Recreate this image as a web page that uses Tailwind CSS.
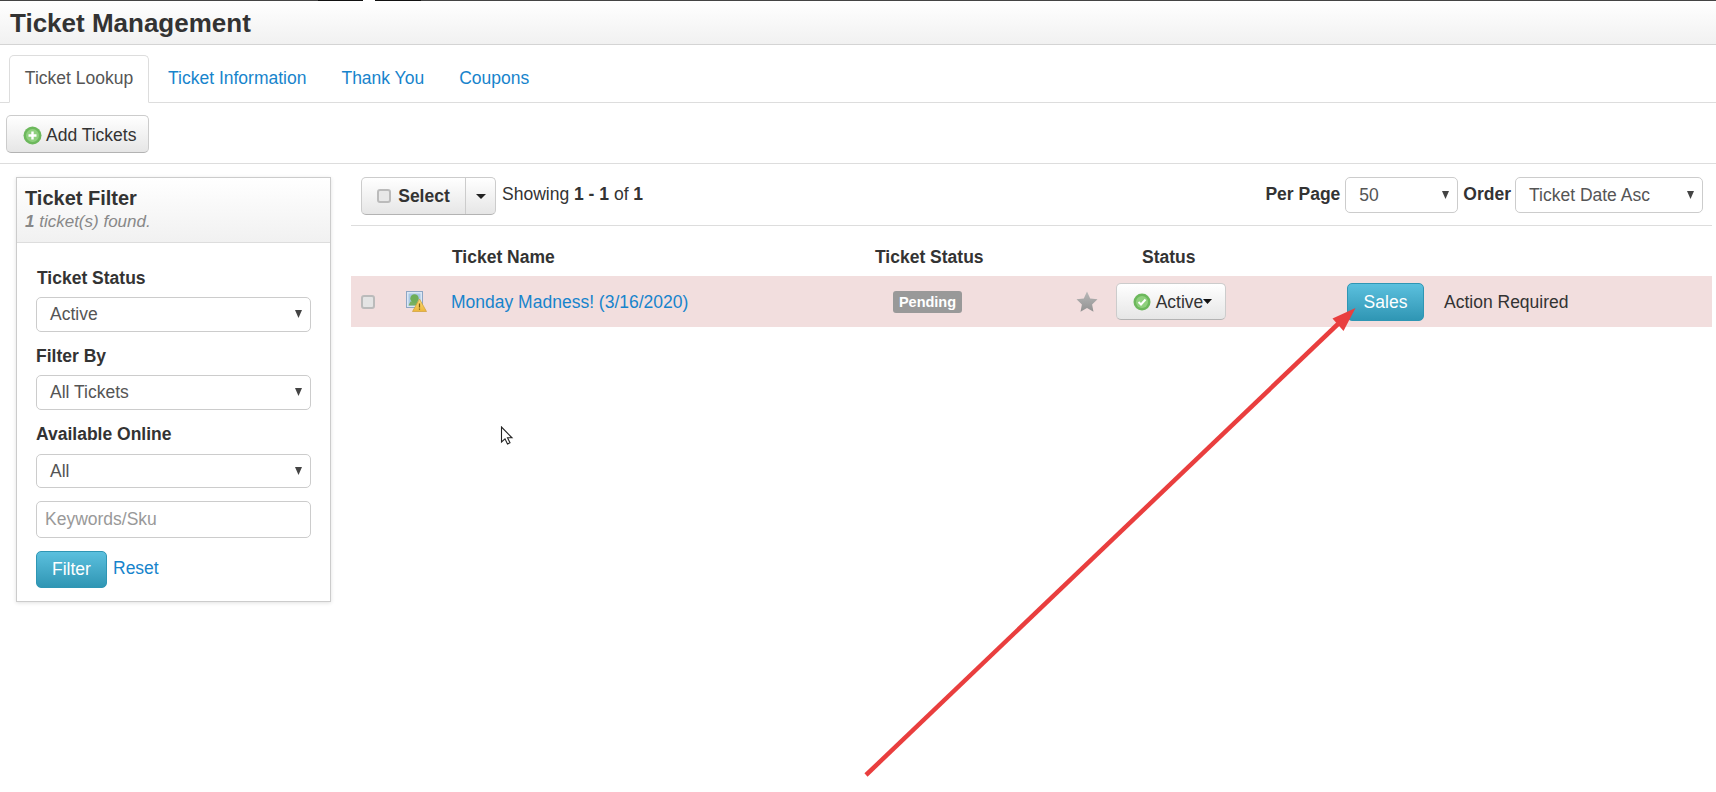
<!DOCTYPE html>
<html lang="en">
<head>
    <meta charset="UTF-8">
    <title>Ticket Management</title>
    <script src="https://cdn.jsdelivr.net/npm/@tailwindcss/browser@4"></script>
</head>
<body class="bg-white overflow-hidden">
<div class="relative w-[1716px] h-[792px] overflow-hidden font-['Liberation_Sans',Arial,sans-serif] text-[17.5px] leading-[24px] text-[#333]">

    <!-- Leftover edge of the page above, cut off by the screenshot -->
    <div class="h-px flex">
        <div class="w-[318px] bg-[#444]"></div>
        <div class="w-[45px] bg-[#111]"></div>
        <div class="w-[12px] bg-white"></div>
        <div class="w-[46px] bg-[#111]"></div>
        <div class="flex-1 bg-[#444]"></div>
    </div>

    <!-- Title bar -->
    <div class="h-[44px] pl-[10px] border-b border-[#d4d4d4] bg-gradient-to-b from-white to-[#f1f1f1]">
        <h1 class="text-[26px] leading-[45px] font-bold">Ticket Management</h1>
    </div>

    <!-- Tabs -->
    <div class="h-[58px] pt-[10px] pl-[9px] flex border-b border-[#ddd]">
        <a class="w-[140px] h-[48px] pb-[2px] flex items-center justify-center bg-white border border-[#ddd] border-b-white rounded-t-[5px] text-[#555]">Ticket Lookup</a>
        <a class="ml-[2px] pl-[17px] pr-[18px] pb-[2px] flex items-center text-[#1784cc]">Ticket Information</a>
        <a class="pl-[17px] pr-[18px] pb-[2px] flex items-center text-[#1784cc]">Thank You</a>
        <a class="px-[17px] pb-[2px] flex items-center text-[#1784cc]">Coupons</a>
    </div>

    <!-- Toolbar -->
    <div class="h-[61px] pt-[12px] pl-[6px] border-b border-[#ddd]">
        <button class="w-[143px] h-[38px] pl-[16px] pt-[2px] flex items-center gap-[4px] rounded-[5px] border border-[#ccc] border-b-[#b3b3b3] bg-gradient-to-b from-white to-[#e6e6e6]">
            <svg width="19" height="19" viewBox="0 0 19 19"><circle cx="9.500" cy="9.500" r="9" fill="#6cb85c"/><circle cx="9.500" cy="9.500" r="6.500" fill="#8fd07e"/><path d="M9.500 5.500v8M5.500 9.500h8" stroke="#fff" stroke-width="2.400"/></svg>
            Add Tickets
        </button>
    </div>

    <div class="flex">
        <!-- Filter sidebar -->
        <div class="w-[351px] pl-[16px] pt-[13px] shrink-0">
            <div class="w-[315px] h-[425px] border border-[#ccc] shadow-[0_1px_4px_rgba(0,0,0,0.12)]">
                <div class="h-[65px] pl-[8px] pt-[8px] border-b border-[#ddd] bg-gradient-to-b from-white to-[#f1f1f1]">
                    <div class="text-[20px] leading-[24px] font-bold">Ticket Filter</div>
                    <div class="mt-[1px] text-[17px] leading-[22px] italic text-[#888]"><b>1</b> ticket(s) found.</div>
                </div>
                <div class="px-[19px] pt-[23px]">
                    <div class="pl-[1px] h-[24px] font-bold leading-[24px]">Ticket Status</div>
                    <div class="mt-[7px] h-[35px] pl-[13px] pr-[8px] pb-[2px] flex items-center justify-between rounded-[5px] border border-[#ccc] text-[#555]">
                        Active
                        <svg width="7" height="8" viewBox="0 0 7 8"><path d="M0 0h7L3.500 8z" fill="#444"/></svg>
                    </div>
                    <div class="mt-[12px] h-[24px] font-bold leading-[24px]">Filter By</div>
                    <div class="mt-[7px] h-[35px] pl-[13px] pr-[8px] pb-[2px] flex items-center justify-between rounded-[5px] border border-[#ccc] text-[#555]">
                        All Tickets
                        <svg width="7" height="8" viewBox="0 0 7 8"><path d="M0 0h7L3.500 8z" fill="#444"/></svg>
                    </div>
                    <div class="mt-[12px] h-[24px] font-bold leading-[24px]">Available Online</div>
                    <div class="mt-[8px] h-[34px] pl-[13px] pr-[8px] flex items-center justify-between rounded-[5px] border border-[#ccc] text-[#555]">
                        All
                        <svg width="7" height="8" viewBox="0 0 7 8"><path d="M0 0h7L3.500 8z" fill="#444"/></svg>
                    </div>
                    <input placeholder="Keywords/Sku" class="mt-[13px] block w-full h-[37px] pl-[8px] rounded-[5px] border border-[#ccc] placeholder:text-[#999]">
                    <div class="mt-[13px] flex items-start">
                        <button class="w-[71px] h-[37px] pb-[1px] rounded-[5px] border border-[#2f96b4] text-white bg-gradient-to-b from-[#5bc0de] to-[#2f96b4]">Filter</button>
                        <a class="ml-[6px] mt-[5px] text-[#1784cc]">Reset</a>
                    </div>
                </div>
            </div>
        </div>

        <!-- Ticket list -->
        <div class="flex-1 pr-[4px]">
            <div class="h-[62px] pt-[13px] pl-[10px] pr-[9px] flex border-b border-[#ddd]">
                <div class="flex h-[38px] rounded-[5px] border border-[#ccc] border-b-[#b3b3b3] bg-gradient-to-b from-white to-[#e6e6e6]">
                    <div class="w-[104px] flex items-center justify-center gap-[7px] border-r border-[#ccc] font-bold">
                        <input type="checkbox" class="appearance-none w-[14px] h-[14px] rounded-[3px] border-2 border-[#bbb] bg-[#e8e8e8]">
                        Select
                    </div>
                    <div class="w-[29px] flex items-center justify-center">
                        <svg width="10" height="5" viewBox="0 0 10 5"><path d="M0 0h10L5 5z" fill="#222"/></svg>
                    </div>
                </div>
                <div class="ml-[6px] pt-[5px]">Showing <b>1 - 1</b> of <b>1</b></div>
                <div class="ml-auto flex">
                    <b class="pt-[5px]">Per Page</b>
                    <div class="ml-[5px] w-[113px] h-[36px] pl-[13px] pr-[8px] flex items-center justify-between rounded-[5px] border border-[#ccc] text-[#555]">
                        50
                        <svg width="7" height="8" viewBox="0 0 7 8"><path d="M0 0h7L3.500 8z" fill="#444"/></svg>
                    </div>
                    <b class="ml-[5px] pt-[5px]">Order</b>
                    <div class="ml-[4px] w-[188px] h-[36px] pl-[13px] pr-[8px] flex items-center justify-between rounded-[5px] border border-[#ccc] text-[#555]">
                        Ticket Date Asc
                        <svg width="7" height="8" viewBox="0 0 7 8"><path d="M0 0h7L3.500 8z" fill="#444"/></svg>
                    </div>
                </div>
            </div>

            <!-- Header row -->
            <div class="h-[50px] pt-[11px] flex items-center font-bold">
                <div class="w-[101px]"></div>
                <div class="w-[423px]">Ticket Name</div>
                <div class="w-[267px]">Ticket Status</div>
                <div>Status</div>
            </div>

            <!-- Ticket row -->
            <div class="h-[51px] flex items-center bg-[#f2dede]">
                <input type="checkbox" class="ml-[10px] appearance-none w-[14px] h-[14px] rounded-[3px] border-2 border-[#bbb] bg-[#e4e4e4]">
                <svg class="ml-[31px]" width="21" height="21" viewBox="0 0 21 21">
                    <defs>
                        <linearGradient id="warn" x1="0" y1="0" x2="0" y2="1"><stop offset="0" stop-color="#f7dc7a"/><stop offset="1" stop-color="#eeb63a"/></linearGradient>
                    </defs>
                    <rect x="0.500" y="0.500" width="16" height="16" fill="#dbe7f5" stroke="#8ea6c4"/>
                    <rect x="2.500" y="2.500" width="12" height="12" fill="#a9c8e4"/>
                    <path d="M2.500 14.500l2-4h10v4z" fill="#78b061"/>
                    <circle cx="8.500" cy="7.500" r="4.200" fill="#6fae58"/>
                    <path d="M13.500 8l7 12.500h-14z" fill="url(#warn)" stroke="#cf9f38" stroke-width="0.700"/>
                    <path d="M13.500 12.500v4M13.500 17.500v1.300" stroke="#7a5a10" stroke-width="1.200"/>
                </svg>
                <a class="ml-[24px] w-[442px] text-[#1784cc]">Monday Madness! (3/16/2020)</a>
                <span class="w-[69px] h-[22px] flex items-center justify-center rounded-[3px] bg-[#999] text-white text-[14.5px] font-bold">Pending</span>
                <svg class="ml-[114px]" width="22" height="21" viewBox="0 0 22 21">
                    <defs>
                        <linearGradient id="star" x1="0" y1="0" x2="0" y2="1"><stop offset="0" stop-color="#b8b8b8"/><stop offset="1" stop-color="#929292"/></linearGradient>
                    </defs>
                    <path d="M11 0.500l3.200 6.900 7.300 0.900-5.400 5.100 1.400 7.400L11 17.100 4.500 20.800l1.400-7.400L0.500 8.300l7.300-0.900z" fill="url(#star)"/>
                </svg>
                <button class="ml-[18px] w-[110px] h-[37px] pl-[3px] flex items-center justify-center rounded-[5px] border border-[#ccc] border-b-[#b3b3b3] bg-gradient-to-b from-white to-[#e6e6e6]">
                    <svg class="mr-[5px]" width="18" height="18" viewBox="0 0 18 18"><circle cx="9" cy="9" r="8.500" fill="#6cb85c"/><circle cx="9" cy="9" r="6" fill="#8fd07e"/><path d="M5.500 9l2.500 2.500 4.500-5" fill="none" stroke="#fff" stroke-width="2"/></svg>
                    Active<svg width="9" height="5" viewBox="0 0 9 5"><path d="M0 0h9L4.500 5z" fill="#111"/></svg>
                </button>
                <button class="ml-[121px] w-[77px] h-[38px] rounded-[5px] border border-[#2f96b4] text-white bg-gradient-to-b from-[#5bc0de] to-[#2f96b4]">Sales</button>
                <span class="ml-[20px]">Action Required</span>
            </div>
        </div>
    </div>

    <!-- Mouse pointer caught in the screenshot -->
    <svg class="absolute left-[500px] top-[426px]" width="15" height="20" viewBox="0 0 15 20"><path d="M1.500 1v15l3.500-3.200 2.500 5.200 2.500-1.200-2.500-5h4.500z" fill="#fff" stroke="#222" stroke-width="1.100"/></svg>

    <!-- Red annotation arrow -->
    <svg class="absolute left-0 top-0 pointer-events-none" width="1716" height="792" viewBox="0 0 1716 792">
        <path d="M866 775L1338 324" stroke="#e93e3e" stroke-width="4.500" fill="none"/>
        <path d="M1355.500 308L1332.500 318.500 1343.500 331z" fill="#e93e3e"/>
    </svg>
</div>
</body>
</html>
